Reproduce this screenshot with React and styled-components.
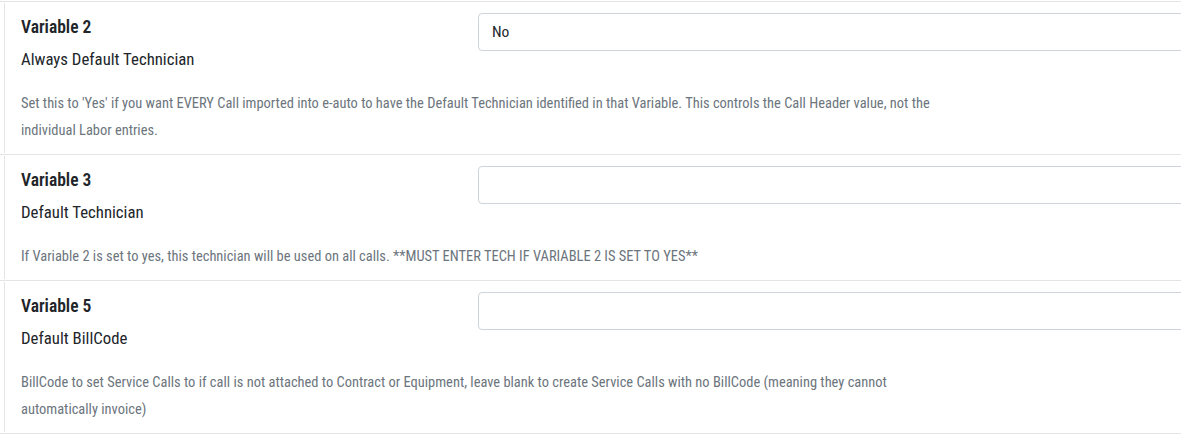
import React from 'react'
import styled, { createGlobalStyle } from 'styled-components'

const GlobalStyle = createGlobalStyle`
  body {
    margin: 0;
    background: #fff;
    font-family: Roboto, "Open Sans", sans-serif;
    font-stretch: 75%;
    color: #212529;
    overflow: hidden;
  }
`

const List = styled.div`
  padding-top: 1px;
  width: 1500px;
`

const Item = styled.section`
  border-bottom: 1px solid #e2e4e6;
  &:first-child {
    border-top: 1px solid #e2e4e6;
  }
`

const Panel = styled.div`
  margin: 1px 0 1px 4px;
  padding: 12px 16px 9px 16px;
  border-left: 1px solid #e2e4e6;
`

const Head = styled.div`
  display: grid;
  grid-template-columns: 457px 1fr;
  align-items: start;
`

const Title = styled.h3`
  margin: 0;
  font-size: 17.5px;
  font-weight: 600;
  line-height: 24px;
`

const Subtitle = styled.div`
  margin-top: 8px;
  font-size: 16.8px;
  line-height: 24px;
`

const Field = styled.input`
  box-sizing: border-box;
  margin-top: -2px;
  width: 100%;
  height: 38px;
  padding: 0 13px;
  border: 1px solid #ced4da;
  border-radius: 4px;
  background: #fff;
  font-family: inherit;
  font-stretch: 75%;
  font-size: 15.5px;
  color: #212529;
  outline: none;
`

const Description = styled.p`
  margin: 19px 0 0 0;
  max-width: 925px;
  font-size: 14.46px;
  line-height: 27px;
  color: #6c757d;
`

const variables = [
  {
    name: 'Variable 2',
    label: 'Always Default Technician',
    value: 'No',
    help: "Set this to 'Yes' if you want EVERY Call imported into e-auto to have the Default Technician identified in that Variable. This controls the Call Header value, not the individual Labor entries.",
  },
  {
    name: 'Variable 3',
    label: 'Default Technician',
    value: '',
    help: 'If Variable 2 is set to yes, this technician will be used on all calls. **MUST ENTER TECH IF VARIABLE 2 IS SET TO YES**',
  },
  {
    name: 'Variable 5',
    label: 'Default BillCode',
    value: '',
    help: 'BillCode to set Service Calls to if call is not attached to Contract or Equipment, leave blank to create Service Calls with no BillCode (meaning they cannot automatically invoice)',
  },
]

export default function App() {
  return (
    <>
      <GlobalStyle />
      <List>
        {variables.map(v => (
          <Item key={v.name}>
            <Panel>
              <Head>
                <div>
                  <Title>{v.name}</Title>
                  <Subtitle>{v.label}</Subtitle>
                </div>
                <Field defaultValue={v.value} readOnly />
              </Head>
              <Description>{v.help}</Description>
            </Panel>
          </Item>
        ))}
      </List>
    </>
  )
}
